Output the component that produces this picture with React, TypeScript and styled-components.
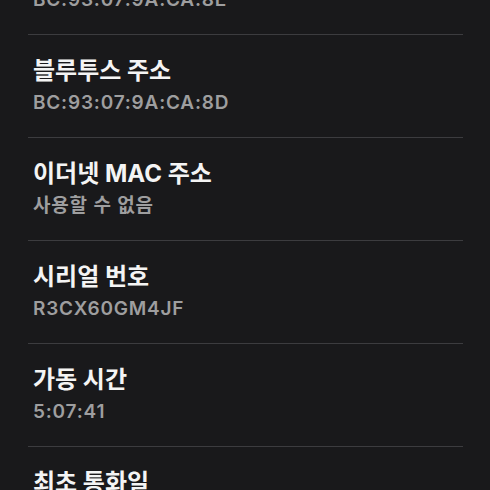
import styled, { createGlobalStyle } from "styled-components";

const GlobalStyle = createGlobalStyle`
  html, body {
    margin: 0;
    padding: 0;
    background: #19191b;
    overflow: hidden;
  }
`;

const items = [
  { title: "Wi-Fi MAC 주소", value: "BC:93:07:9A:CA:8E" },
  { title: "블루투스 주소", value: "BC:93:07:9A:CA:8D" },
  { title: "이더넷 MAC 주소", value: "사용할 수 없음" },
  { title: "시리얼 번호", value: "R3CX60GM4JF" },
  { title: "가동 시간", value: "5:07:41" },
  { title: "최초 통화일", value: "2022년 3월" },
];

const App = () => {
  return (
    <Page>
      <GlobalStyle />
      <List>
        {items.map((item, i) => (
          <Row key={item.title} $first={i === 0}>
            <Title>{item.title}</Title>
            <Value>{item.value}</Value>
          </Row>
        ))}
      </List>
    </Page>
  );
};

export default App;

const Page = styled.div`
  width: 490px;
  height: 490px;
  overflow: hidden;
  background: #19191b;
  font-family: Inter, "Noto Sans CJK KR", sans-serif;
`;

const List = styled.div`
  margin: -68px 27px 0 28px;
  display: flex;
  flex-direction: column;
`;

const Row = styled.div<{ $first?: boolean }>`
  padding: 21px 5px 22px;
  border-top: ${(p) => (p.$first ? "none" : "1px solid #3c3c3f")};
  display: flex;
  flex-direction: column;
  gap: 5px;
`;

const Title = styled.div`
  font-family: Inter, "Noto Sans CJK KR", sans-serif;
  font-size: 24px;
  line-height: 30px;
  font-weight: 700;
  color: #f4f4f4;
`;

const Value = styled.div`
  font-family: Inter, "Noto Sans CJK KR", sans-serif;
  font-size: 19px;
  line-height: 24px;
  font-weight: 600;
  letter-spacing: 0.8px;
  color: #9e9e9f;
`;
